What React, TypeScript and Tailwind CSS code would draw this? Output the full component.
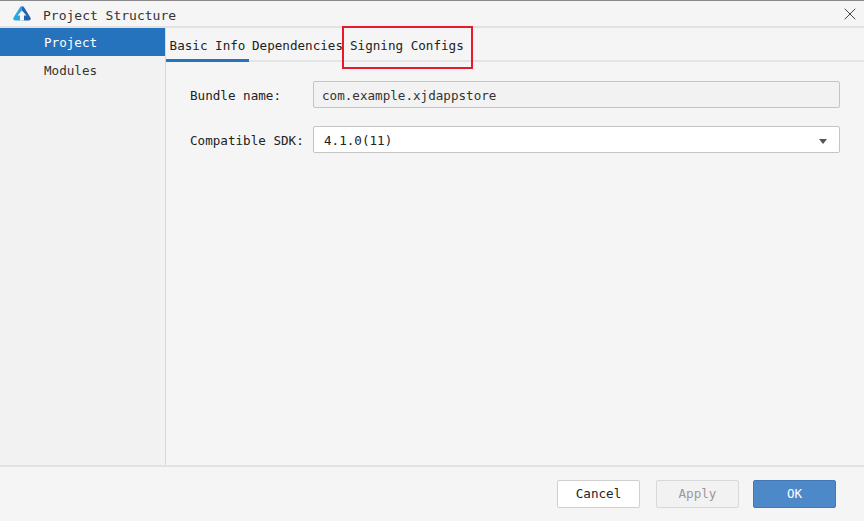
import { X } from "lucide-react";

const mono = "font-['DejaVu_Sans_Mono',monospace]";

function Logo() {
  return (
    <svg width="18" height="15" viewBox="0 0 18 15">
      <path d="M9 0.2 Q7.6 0.2 6.8 1.6 L0.6 11.6 Q-0.6 14.4 2.4 14.4 L9 14.4 Z" fill="#2ba6de" />
      <path d="M9 0.2 Q10.4 0.2 11.2 1.6 L17.4 11.6 Q18.6 14.4 15.6 14.4 L9 14.4 Z" fill="#2464ad" />
      <path d="M9 4.4 L13.4 9.6 L11 9.6 L11 14.4 L7 14.4 L7 9.6 L4.6 9.6 Z" fill="#f5f5f5" />
    </svg>
  );
}

export default function App() {
  return (
    <div className={`relative w-[864px] h-[521px] flex flex-col bg-[#f5f5f5] text-[#222] text-[12.6px] overflow-hidden border-t border-[#8a8a8a] ${mono}`}>
      {/* title bar */}
      <div className="h-[27px] shrink-0 flex items-center border-b-2 border-[#e2e2e2] pl-[13px] pr-[4px]">
        <Logo />
        <span className="ml-[12px] pt-[4px] text-[13px] text-[#333]">Project Structure</span>
        <X size={20} strokeWidth={1.2} className="ml-auto text-[#444]" />
      </div>

      <div className="flex-1 flex min-h-0">
        {/* sidebar */}
        <div className="w-[166px] shrink-0 border-r border-[#d8d8d8] bg-[#f2f2f2]">
          <div className="h-[28px] bg-[#2673bd] text-white font-medium flex items-center pl-[44px] pt-[2px]">Project</div>
          <div className="h-[28px] flex items-center pl-[44px] pt-[2px] text-[#333]">Modules</div>
        </div>

        <div className="flex-1 min-w-0">
          {/* tabs */}
          <div className="h-[34px] flex border-b-2 border-[#e4e4e4]">
            <div className="relative w-[83px] flex items-center justify-center pt-[5px]">
              Basic Info
              <div className="absolute left-0 right-0 -bottom-[2px] h-[3px] bg-[#2673bd]" />
            </div>
            <div className="flex items-center ml-[3px] pt-[5px]">Dependencies</div>
            <div className="flex items-center ml-[7px] pt-[5px]">Signing Configs</div>
          </div>

          {/* form */}
          <div className="pl-[24px] pr-[24px] pt-[19px] flex flex-col gap-[18px]">
            <div className="flex items-center">
              <label className="w-[123px] shrink-0 pt-[3px]">Bundle name:</label>
              <div className="flex-1 h-[27px] border border-[#c4c4c4] rounded-[2px] bg-[#f2f2f2] flex items-center pl-[8px] pt-[3px] text-[#333]">com.example.xjdappstore</div>
            </div>
            <div className="flex items-center">
              <label className="w-[123px] shrink-0 pt-[3px]">Compatible SDK:</label>
              <div className="flex-1 h-[27px] border border-[#c4c4c4] rounded-[2px] bg-white flex items-center pl-[10px] pr-[12px] pt-[3px]">
                4.1.0(11)
                <span className="ml-auto w-0 h-0 border-l-[4px] border-r-[4px] border-t-[5px] border-l-transparent border-r-transparent border-t-[#555]" />
              </div>
            </div>
          </div>
        </div>
      </div>

      {/* footer */}
      <div className="h-[56px] shrink-0 border-t-2 border-[#e2e2e2] flex items-start justify-end pt-[13px] pr-[28px]">
        <button className="w-[83px] h-[28px] pt-[1px] bg-white border border-[#d0d0d0] rounded-[2px] text-[#222]">Cancel</button>
        <button className="ml-[16px] w-[83px] h-[28px] pt-[1px] bg-[#f2f2f2] border border-[#d8d8d8] rounded-[2px] text-[#999]">Apply</button>
        <button className="ml-[14px] w-[83px] h-[28px] pt-[1px] bg-[#4d88c9] border border-[#4478b5] rounded-[2px] text-white">OK</button>
      </div>

      {/* annotation over the screenshot */}
      <div className="absolute left-[342px] top-[25px] w-[131px] h-[43px] border-2 border-[#e8192c] pointer-events-none" />
    </div>
  );
}
